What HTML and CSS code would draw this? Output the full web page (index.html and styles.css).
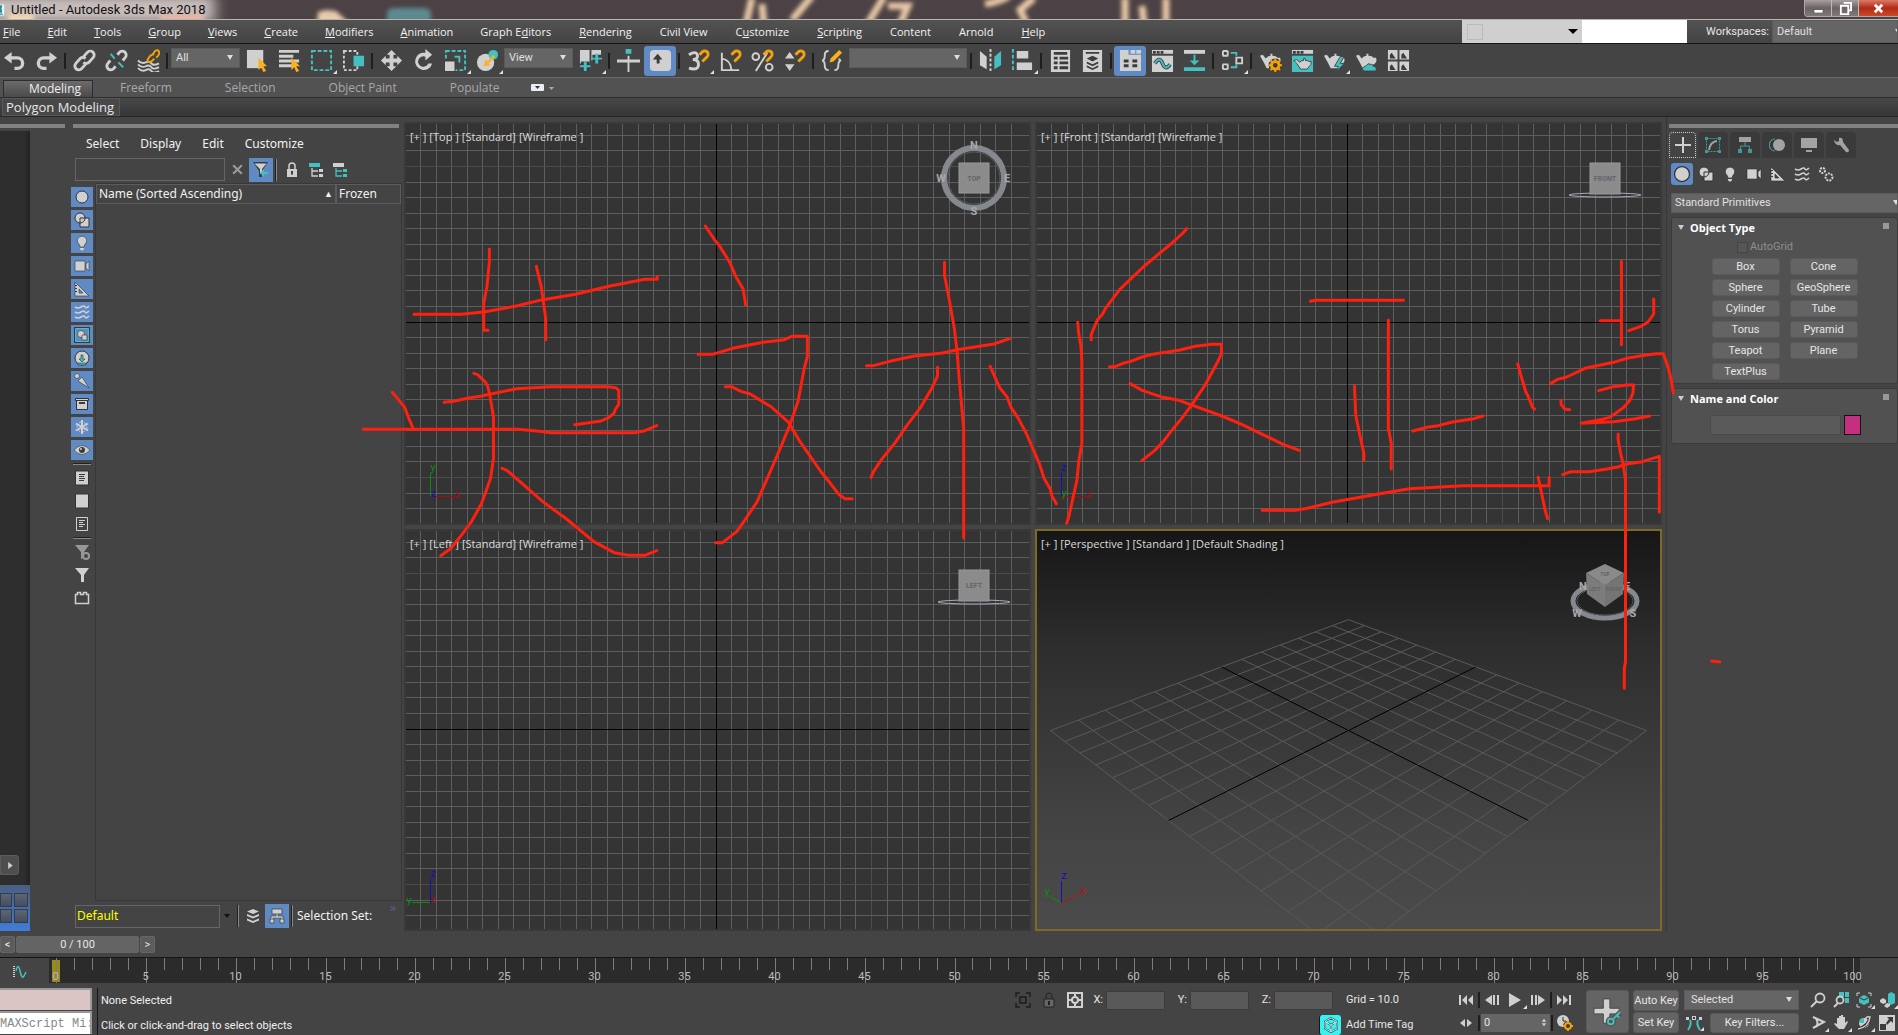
FILE: index.html
```
<!DOCTYPE html>
<html lang="en">
<head>
    <meta charset="UTF-8">
    <meta name="viewport" content="width=device-width, initial-scale=1.0">
    <title>Untitled - Autodesk 3ds Max 2018</title>
    <link rel="stylesheet" href="styles.css">
</head>
<body>
    <!-- Icon sprite -->
    <svg class="sprite" aria-hidden="true">
        <symbol id="undo" viewBox="0 0 24 24"><path d="M9 1v4.500h6a7 7 0 0 1 0 14.500h-3v-3.500h3a3.700 3.700 0 0 0 0-7.500H9V13L1 7z" transform="translate(0 2)"/></symbol>
        <symbol id="redo" viewBox="0 0 24 24"><path d="M15 3v4.500H9A7 7 0 0 0 9 22h3v-3.500H9A3.700 3.700 0 0 1 9 11h6v4l8-6z"/></symbol>
        <symbol id="link" viewBox="0 0 24 24"><g class="s w3"><path d="M11 8l4-4.500a4 4 0 0 1 6 5.500l-4.500 5a4 4 0 0 1-5.500 0"/><path d="M13 16l-4 4.500a4 4 0 0 1-6-5.500l4.500-5a4 4 0 0 1 5.500 0"/></g></symbol>
        <symbol id="unlink" viewBox="0 0 24 24"><g class="s w3"><path d="M13 6l2-2.500a4 4 0 0 1 6 5.500l-2.500 3"/><path d="M11 18l-2 2.500a4 4 0 0 1-6-5.500l2.500-3"/></g><path class="ts w2" d="M6 5l4 5m4 4l5 5"/></symbol>
        <symbol id="bind" viewBox="0 0 24 24"><path class="s w2" d="M1 12q4 4 8 2t6 1 8 0M1 16q4 4 8 2t6 1 8 0M1 20q4 4 8 2t6 1 8 0"/><path class="os w2" d="M16 6l3-4q3-2 4 1t-3 6m-2-3q-2-1-4 1l-3 4q0 4 4 2l3-3"/></symbol>
        <symbol id="selobj" viewBox="0 0 24 24"><path d="M1 1h17v19H1z"/><path class="o" d="M13 9l9 9h-4l3 5-3 1-2-5-3 3z"/></symbol>
        <symbol id="byname" viewBox="0 0 24 24"><path d="M1 1h21v3H1zM1 6h15v3H1zM1 11h21v3H1zM1 16h14v3H1z"/><path class="o" d="M14 9l9 9h-4l3 5-3 1-2-5-3 3z"/></symbol>
        <symbol id="rect" viewBox="0 0 24 24"><path class="ts w2" stroke-dasharray="4 2" d="M2 2h20v20H2z"/></symbol>
        <symbol id="cross" viewBox="0 0 24 24"><path class="s w2" stroke-dasharray="3 2" d="M2 2h14v20H2z"/><path class="t" d="M12 7h11v11H12z"/></symbol>
        <symbol id="move" viewBox="0 0 24 24"><path d="M12 1l5 5h-3v4h4V7l5 5-5 5v-3h-4v4h3l-5 5-5-5h3v-4H6v3l-5-5 5-5v3h4V6H7z"/></symbol>
        <symbol id="rotate" viewBox="0 0 24 24"><path d="M14 0v4a9 9 0 1 0 7 11h-4a5.500 5.500 0 1 1-3-7v4l7-6z"/></symbol>
        <symbol id="scale" viewBox="0 0 24 24"><path class="ts w2" stroke-dasharray="4 2" d="M2 2h20v20H2z"/><path class="k" d="M0 11h12v13H0z"/><path d="M1 13h10v10H1z"/><path class="ts w2" d="M11 8h5v6"/></symbol>
        <symbol id="place" viewBox="0 0 24 24"><circle cx="10" cy="14" r="9"/><circle class="t" cx="18" cy="6" r="5"/><path class="o" d="M8 18l2-7 2 2 6-7 2 2-7 7 2 2z"/></symbol>
        <symbol id="center" viewBox="0 0 24 24"><path d="M1 1h10v14H1zM13 1h10v11H13z"/><path class="k" d="M2 13h9v10H2zM14 6h9v8H14z"/><path class="t" d="M5 13h3v4h4v2H8v4H5v-4H1v-2h4zM17 5h3v4h4v2h-4v4h-3v-4h-4V9h4z"/></symbol>
        <symbol id="manip" viewBox="0 0 24 24"><path d="M11 7h2v4h11v3H13v10h-2V14H0v-3h11z"/><path class="t" d="M9 0h6v5H9z"/></symbol>
        <symbol id="kbd" viewBox="0 0 24 24"><rect x="1" y="1" width="22" height="22" rx="4"/><path class="k" d="M9 5l5 6h-3v4H8v-4H4z"/></symbol>
        <symbol id="magnet" viewBox="0 0 24 24"><path class="os w3" d="M13 6l3-3a3.500 3.500 0 0 1 5 5l-5 5"/></symbol>
        <symbol id="snap3" viewBox="0 0 24 24"><path class="s w3" d="M2 6q8-5 9 1 0 4-5 4 6 0 6 5 0 7-10 4"/><use href="#magnet"/></symbol>
        <symbol id="snapa" viewBox="0 0 24 24"><path class="s w2" d="M3 4v18h18M3 10q9 1 10 12"/><use href="#magnet"/></symbol>
        <symbol id="snapp" viewBox="0 0 24 24"><g class="s w2"><circle cx="5" cy="8" r="3.500"/><circle cx="19" cy="19" r="3.500"/><path d="M5 23L17 4"/></g><use href="#magnet"/></symbol>
        <symbol id="snaps" viewBox="0 0 24 24"><path d="M7 3l5 7H2zM7 23l5-7H2z"/><use href="#magnet"/></symbol>
        <symbol id="sets" viewBox="0 0 24 24"><path class="s w2" d="M8 2q-4 0-4 4 0 6-3 6 3 0 3 6 0 4 4 4M14 22q4 0 4-4 0-6 3-6-2 0-2-2"/><path class="o" d="M9 14l1-4 9-9 3 3-9 9z"/></symbol>
        <symbol id="mirror" viewBox="0 0 24 24"><path d="M1 2l7 6v13l-7-4z"/><path class="t" d="M23 2l-7 6v13l7-4z"/><path class="s w2" stroke-dasharray="3 2" d="M12 0v24"/></symbol>
        <symbol id="align" viewBox="0 0 24 24"><path class="ts w2" stroke-dasharray="4 2" d="M2 0v24"/><path d="M6 2h12v8H6zM6 14h16v8H6z"/></symbol>
        <symbol id="sheet" viewBox="0 0 24 24"><path d="M2 1h20v23H2z"/><path class="k" d="M5 3h14v3H5zM5 8h4v3H5zM11 8h9v3h-9zM5 13h4v3H5zM11 13h9v3h-9zM5 18h4v3H5zM11 18h9v3h-9z"/></symbol>
        <symbol id="layersheet" viewBox="0 0 24 24"><path d="M2 1h20v23H2z"/><path class="k" d="M5 3h14v2H5zM12 7l6 3-6 3-6-3zM6 13l6 3 6-3v2l-6 3-6-3zM6 17l6 3 6-3v2l-6 3-6-3z"/></symbol>
        <symbol id="ribbon" viewBox="0 0 24 24"><path d="M1 1h9v5h13v17H1z"/><path d="M12 1h5v4h-5zM18 1h5v4h-5z"/><path class="k" d="M5 11h5v3H5zM14 11h5v3h-5zM5 16h5v3H5zM14 16h5v3h-5z"/></symbol>
        <symbol id="curve" viewBox="0 0 24 24"><path d="M1 1h22v4H1z"/><path d="M1 7h22v17H1z"/><path class="k" d="M2 2h3v3H2zM6 2h3v3H6zM10 2h3v3h-3z"/><path class="s k2" d="M4 15q5-8 8 0t8 1"/><path class="ts w2" d="M4 15q5-8 8 0t8 1"/></symbol>
        <symbol id="dope" viewBox="0 0 24 24"><path d="M1 1h22v4H1z"/><path class="t" d="M1 19h22v4H1zM11 6h2v6h4l-5 5-5-5h4z"/></symbol>
        <symbol id="schem" viewBox="0 0 24 24"><path d="M1 1h7v7H1zM1 15h7v7H1zM15 8h8v8h-8z"/><path class="k" d="M3 3h3v3H3zM3 17h3v3H3zM17 10h4v4h-4zM1 1h1v1H1zM7 1h1v1H7zM1 7h1v1H1zM7 7h1v1H7zM1 15h1v1H1zM7 15h1v1H7zM1 21h1v1H1zM7 21h1v1H7z"/><path class="ts w2" d="M10 4h6v3M10 19h6v-3"/></symbol>
        <symbol id="pot" viewBox="0 0 24 24"><path d="M1 7l3-1 3 4q2-3 5-3V5h2v2q4 0 5 2h3q2 5-4 8l-2 3H8L5 14z"/></symbol>
        <symbol id="potgear" viewBox="0 0 24 24"><use href="#pot"/><circle class="k" cx="17" cy="17" r="7"/><circle class="os w3" cx="17" cy="17" r="4"/><path class="os w2" d="M17 10v3m0 8v3m-7-7h3m8 0h3M12 12l2 2m6 6l2 2m0-10l-2 2m-6 6l-2 2"/></symbol>
        <symbol id="potframe" viewBox="0 0 24 24"><path d="M1 1h22v4H1z"/><path class="t" d="M1 7h22v17H1z"/><path class="k" d="M2 2h3v3H2zM6 2h3v3H6zM10 2h3v3h-3z"/><path stroke="#444" d="M3 12l3-1 3 3q1-2 4-2v-2h2v2q3 0 4 1h2q1 4-2 5l-2 3h-7l-4-6z"/></symbol>
        <symbol id="potfast" viewBox="0 0 24 24"><use href="#pot"/><path class="t" stroke="#444" d="M18 8l-6 10h4l-2 6 8-9h-4l4-7z"/></symbol>
        <symbol id="potcloud" viewBox="0 0 24 24"><use href="#pot"/><path class="t" stroke="#444" d="M9 23q-3-4 2-5 2-4 6-2 2 0 2 2 4 0 3 5z"/></symbol>
        <symbol id="gallery" viewBox="0 0 24 24"><path d="M1 1h10v10H1zM13 1h10v10H13zM1 13h10v10H1zM13 13h10v10H13z"/><path class="k" d="M3 10V6l2-2 2 3 2 3zM15 10V6l2-2 2 3 2 3zM3 22v-4l2-2 2 3 2 3zM15 22v-4l2-2 2 3 2 3z"/></symbol>
        <symbol id="sphere" viewBox="0 0 16 16"><circle cx="8" cy="8" r="6" stroke="#333"/></symbol>
        <symbol id="shapes" viewBox="0 0 16 16"><circle cx="6" cy="6" r="5" stroke="#333"/><path stroke="#333" d="M6 6h9v9H6z"/><path fill="none" stroke="#333" d="M11 6a5 5 0 0 1-5 5"/></symbol>
        <symbol id="bulb" viewBox="0 0 16 16"><path stroke="#333" stroke-width=".6" d="M6 12q0-2-2-4a4.600 4.600 0 1 1 8 0q-2 2-2 4z"/><path d="M6 13h4v1l-1 1.500H7L6 14z"/></symbol>
        <symbol id="camera" viewBox="0 0 16 16"><path d="M1 3h10v10H1zM12 6l3-3v10l-3-3z" stroke="#333" stroke-width=".6"/></symbol>
        <symbol id="helper" viewBox="0 0 16 16"><path fill-rule="evenodd" stroke="#333" stroke-width=".6" d="M1 1l14 14H1zM5 8v4h4z"/><path class="k" d="M1 4h2v1H1zM1 7h2v1H1zM1 10h2v1H1z"/></symbol>
        <symbol id="waves" viewBox="0 0 16 16"><path class="s" stroke-width="1.600" d="M1 3q3 2 6 0t4 0 4-1M1 8q3 2 6 0t4 0 4-1M1 13q3 2 6 0t4 0 4-1"/></symbol>
        <symbol id="groups" viewBox="0 0 16 16"><path class="k" d="M0 0h16v16H0z"/><path fill="#5f8ac4" d="M2 2h12v12H2z"/><path class="ts" d="M1.500 1.500h13v13h-13z"/><circle cx="7" cy="7" r="3.500" stroke="#333" stroke-width=".6"/><path stroke="#333" stroke-width=".6" d="M8 8h5v5H8z"/></symbol>
        <symbol id="xref" viewBox="0 0 16 16"><circle cx="8" cy="8" r="7" stroke="#333"/><path class="t" stroke="#333" stroke-width=".6" d="M7 5h2v4h2l-3 3-3-3h2zM4 13h8v2H4z"/></symbol>
        <symbol id="bone" viewBox="0 0 16 16"><circle cx="3" cy="3" r="2.500" stroke="#333" stroke-width=".6"/><path stroke="#333" stroke-width=".6" d="M4 8l4-4 7 11z"/></symbol>
        <symbol id="box" viewBox="0 0 16 16"><path stroke="#333" d="M1.500 2.500h13v2h-13zM2.500 4.500h11v9h-11z"/><path class="k" d="M5 6h6v2H5z"/></symbol>
        <symbol id="frost" viewBox="0 0 16 16"><path class="s" stroke-width="2" d="M8 1v14M2 4.500l12 7M2 11.500l12-7"/><circle class="s" cx="8" cy="8" r="5" stroke-dasharray="3 2"/></symbol>
        <symbol id="eye" viewBox="0 0 16 16"><path stroke="#333" stroke-width=".6" d="M0 8q8-9 16 0-8 9-16 0z"/><circle class="k" cx="8" cy="8" r="3"/><circle cx="7" cy="7" r="1"/></symbol>
        <symbol id="doc" viewBox="0 0 16 16"><path stroke="#333" d="M1.500 1h13v14h-13z"/><path class="k" d="M5 4h6v1H5zM5 6h5v1H5zM5 8h6v1H5zM5 10h5v1H5z"/></symbol>
        <symbol id="blank" viewBox="0 0 16 16"><path stroke="#333" d="M1.500 1h13v14h-13z"/></symbol>
        <symbol id="docdark" viewBox="0 0 16 16"><path class="s" d="M2.500 1.500h11v13h-11z"/><path d="M5 4h6v1H5zM5 6h4v1H5zM5 8h6v1H5zM5 10h4v1H5z"/></symbol>
        <symbol id="funnel" viewBox="0 0 16 16"><path d="M1 1h14l-5 7v7H7V8z"/></symbol>
        <symbol id="funnelgear" viewBox="0 0 16 16"><g opacity=".6"><path d="M1 1h14l-5 7-2 7H7V8z"/><circle class="s w2" cx="12" cy="12" r="3"/></g></symbol>
        <symbol id="brick" viewBox="0 0 16 16"><path class="s" stroke-width="1.500" d="M1.500 4.500h2v-2h3v2h3v-2h3v2h2v9h-13z"/></symbol>
        <symbol id="funnelsel" viewBox="0 0 16 16"><path class="k" d="M0 0h15L9 9v6H6V9z"/><path d="M1.500 1.500h12L9 7v4l-1 1-1-1V7z"/><path class="t" d="M7 11l4-4v3h4v2h-4v3z"/></symbol>
        <symbol id="lock" viewBox="0 0 16 16"><path class="s" stroke-width="1.500" d="M5 7V4a3 3 0 0 1 6 0v3"/><path d="M3 7h10v8H3z"/><path class="k" d="M7 9h2v2l-.5 2h-1L7 11z"/></symbol>
        <symbol id="tree1" viewBox="0 0 16 16"><path class="t" d="M1 1h11v4H1z"/><path class="s" stroke-width="1.300" d="M4 6v8h6M4 9h6"/><path d="M11 7h4v3h-4zM11 12h4v3h-4z"/></symbol>
        <symbol id="tree2" viewBox="0 0 16 16"><path d="M1 1h11v4H1z"/><path class="ts" stroke-width="1.300" d="M4 6v8h6M4 9h6"/><path class="t" d="M11 7h4v3h-4zM11 12h4v3h-4z"/></symbol>
        <symbol id="layers" viewBox="0 0 16 16"><path d="M8 1l6 2.500L8 6 2 3.500zM2 6l6 2.500L14 6v2l-6 2.500L2 8zM2 10.500L8 13l6-2.500v2L8 15l-6-2.500z"/></symbol>
        <symbol id="hier" viewBox="0 0 16 16"><path fill="none" stroke="#333" stroke-width="2.500" d="M8 6v3M3 11V9h10v2"/><path stroke="#333" stroke-width=".7" d="M3 1h10v5H3zM1 11h4v4H1zM11 11h4v4h-4z"/><path class="s" stroke-width="1.300" d="M8 6v3M3 11V9h10v2"/></symbol>
        <symbol id="plus" viewBox="0 0 16 16"><path d="M7 0h2v7h7v2H9v7H7V9H0V7h7z"/></symbol>
        <symbol id="modify" viewBox="0 0 16 16"><path class="ts" stroke-dasharray="2 1" d="M1.500 1.500h13v13h-13z"/><path class="t" d="M0 0h3v3H0zM13 0h3v3h-3zM0 13h3v3H0zM13 13h3v3h-3z"/><path class="s w2" d="M4 13q1-8 8-9"/></symbol>
        <symbol id="hierarchy" viewBox="0 0 16 16"><path d="M2 0h12v5H2z"/><path class="ts" d="M8 5v4M3.500 12V9h9v3"/><path class="t" d="M1 12h4v4H1zM11 12h4v4h-4z"/></symbol>
        <symbol id="motion" viewBox="0 0 16 16"><path class="ts" d="M6 2a6 6 0 0 0 0 12M3.500 2.500a6.500 6.500 0 0 0 0 11"/><circle cx="10" cy="8" r="6"/></symbol>
        <symbol id="display" viewBox="0 0 16 16"><path d="M0 1h16v10H0zM5 13h6v2H5z"/></symbol>
        <symbol id="wrench" viewBox="0 0 16 16"><path d="M1 3l3 2 2-1V1q4-1 4 4l6 8q0 3-3 2L7 8Q2 9 1 3z"/></symbol>
        <symbol id="gears" viewBox="0 0 16 16"><circle class="s w2" stroke-dasharray="2 1" cx="4.500" cy="4.500" r="2.500"/><circle class="s w2" stroke-dasharray="2 1" cx="11" cy="11" r="3.500"/></symbol>
        <symbol id="minicurve" viewBox="0 0 16 16"><path class="s w2" stroke-dasharray="1 1" d="M3 3v11"/><path class="ts" stroke-width="1.500" d="M5 8q2-9 4 0t4 5l2-4"/></symbol>
        <symbol id="isolate" viewBox="0 0 16 16"><path fill="none" stroke="#1c1c1c" stroke-width="1.500" d="M1 5V1h4M11 1h4v4M15 11v4h-4M5 15H1v-4M5 5h6v6H5z"/></symbol>
        <symbol id="lockdark" viewBox="0 0 16 16"><path stroke="#222" fill="none" d="M5 7V4a3 3 0 0 1 6 0v3"/><path fill="#666" stroke="#222" d="M3 7h10v8H3z"/><path fill="#222" d="M7 9h2v4H7z"/></symbol>
        <symbol id="absrel" viewBox="0 0 16 16"><path class="s w2" d="M1 1h14v14H1z"/><path class="s w2" d="M8 1v14M1 8h14"/><circle fill="#444" stroke="#d0d0d0" stroke-width="2" cx="8" cy="8" r="3"/></symbol>
        <symbol id="cube" viewBox="0 0 16 16"><path fill="none" stroke="#244" stroke-width="2" d="M8 1l6 3.500v7L8 15l-6-3.500v-7zM5 6l3 2 3-2M8 8v4"/><path fill="none" stroke="#d8e8e8" d="M8 1l6 3.500v7L8 15l-6-3.500v-7zM2 4.500L8 8l6-3.500M8 8v7"/></symbol>
        <symbol id="first" viewBox="0 0 16 16"><path d="M1 3h2v10H1zM9 3v10L4 8zM15 3v10l-5-5z"/></symbol>
        <symbol id="prev" viewBox="0 0 16 16"><path d="M8 3v10L1 8zM9 3h2v10H9zM13 3h2v10h-2z"/></symbol>
        <symbol id="play" viewBox="0 0 16 16"><path d="M2 1l12 7-12 7z"/></symbol>
        <symbol id="next" viewBox="0 0 16 16"><path d="M1 3h2v10H1zM5 3h2v10H5zM8 3v10l7-5z"/></symbol>
        <symbol id="last" viewBox="0 0 16 16"><path d="M13 3h2v10h-2zM7 3v10l5-5zM1 3v10l5-5z"/></symbol>
        <symbol id="keymode" viewBox="0 0 16 16"><path d="M7 4v8L2 8zM9 4v8l5-4z"/></symbol>
        <symbol id="timecfg" viewBox="0 0 16 16"><circle cx="6" cy="6" r="6"/><path fill="none" stroke="#333" d="M6 2v4h3"/><circle class="k" cx="11" cy="11" r="5"/><circle class="os w2" cx="11" cy="11" r="3"/><path class="os w2" d="M11 6v2m0 6v2M6 11h2m6 0h2"/></symbol>
        <symbol id="bigkey" viewBox="0 0 32 32"><path d="M11 2h7v10h10v6H18v10h-7V18H1v-6h10z" stroke="#444"/><g class="s k3"><circle cx="19" cy="26" r="3"/><path d="M22 23l7-7m-3 2l3 3"/></g><g class="ts w2"><circle cx="19" cy="26" r="3"/><path d="M22 23l7-7m-4 3l3 3"/></g></symbol>
        <symbol id="tangent" viewBox="0 0 16 16"><path class="ts w2" d="M2 15q4-6 2-10M14 15q-4-6-2-10"/><path d="M0 2h3v3H0zM13 2h3v3h-3zM6 1h4v4H6z"/><path class="k" d="M7 2h2v2H7z"/></symbol>
        <symbol id="zoom" viewBox="0 0 16 16"><circle class="s" stroke-width="1.800" cx="10" cy="6" r="4.500"/><path class="s w2" d="M7 9l-6 6"/></symbol>
        <symbol id="zoomall" viewBox="0 0 16 16"><path class="t" d="M6 0h5v5H6zM12 0h4v5h-4zM12 6h4v5h-4z"/><circle class="s" stroke-width="1.800" cx="7" cy="8" r="3.500"/><path class="s w2" d="M5 11l-4 4"/></symbol>
        <symbol id="extents" viewBox="0 0 16 16"><path class="s" d="M1 4V1h3M12 1h3v3M15 12v3h-3M4 15H1v-3"/><path class="t" d="M8 3l5 2.500v5L8 13l-5-2.500v-5z"/><path fill="none" stroke="#333" d="M3 5.500L8 8l5-2.500"/></symbol>
        <symbol id="extall" viewBox="0 0 16 16"><path class="t" d="M12 0l4 2v9l-4 2-3-2V2z"/><path d="M4 6l3 2v3l-3 1-3-2V8zM8 11l3 1v2l-3 2-3-2z"/></symbol>
        <symbol id="fov" viewBox="0 0 16 16"><path class="s w2" d="M3 2l11 5L3 13M6 4q3 4 0 8"/></symbol>
        <symbol id="pan" viewBox="0 0 16 16"><path d="M4 9V3h2v4-6h2v6-7h2v7-5h2v6l2-2 1 1-4 7H6L1 9l1-1z"/></symbol>
        <symbol id="orbit" viewBox="0 0 16 16"><circle cx="8" cy="8" r="5"/><path class="t" d="M3 8a5 5 0 0 1 5-5v5z"/><path fill="none" stroke="#333" stroke-width="3" d="M2 14Q13 11 14 2"/><path class="s" stroke-width="1.500" d="M2 14q11-2 12-12-3-1-5 2"/></symbol>
        <symbol id="maxvp" viewBox="0 0 16 16"><path d="M0 0h16v16H0z"/><path class="k" d="M1 9h6v6H1zM8 2h6v6l-2-2-4 4-1-2 3-4z"/></symbol>
    </svg>

    <div class="app">
        <!-- Title bar -->
        <header class="titlebar">
            <svg class="wallpaper" width="1898" height="20" aria-hidden="true">
                <filter id="soft" x="-20%" y="-50%" width="140%" height="200%"><feGaussianBlur stdDeviation="2"/></filter>
                <filter id="softer" x="-20%" y="-80%" width="140%" height="260%"><feGaussianBlur stdDeviation="7 4"/></filter>
                <rect x="-20" y="-4" width="235" height="26" fill="#c6bcba" filter="url(#softer)"/>
                <g filter="url(#soft)">
                    <path fill="#efd9b4" d="M8 14h26v10H8z"/>
                    <path fill="#e8b6a8" d="M160 14h44v10h-44z"/>
                    <path fill="#e9cbab" d="M318 12l8-2 10 1 13 12h-32z"/>
                    <path fill="#5c8a90" d="M387 12q2-4 8-4h28q8 0 8 6v8h-44z"/>
                    <g fill="none" stroke="#e8c8a6" stroke-width="7">
                        <path d="M752-2L746 24M812-4L792 20M762 4l2 22"/>
                        <path d="M884-3l-16 26M888 6h20l-8 18"/>
                        <path d="M985 4q14-2 24-8M1034-2l-14 12 6 12"/>
                        <path d="M1125-2v26M1142 6l2 18M1166-2v26"/>
                    </g>
                </g>
            </svg>
            <svg class="app-icon" viewBox="0 0 16 20" aria-hidden="true"><path fill="#eef6f6" d="M0 2h6v16H0z"/><path fill="#2a8f96" d="M0 3h3v3l-1 2 1 2v4H0zM0 15h4v2H0z"/></svg>
            <span class="caption">Untitled - Autodesk 3ds Max 2018</span>
            <div class="window-buttons">
                <button aria-label="Minimize"><svg viewBox="0 0 14 14"><path d="M2 8h10v4H2z" fill="#fff" stroke="#555"/></svg></button>
                <button aria-label="Restore"><svg viewBox="0 0 14 14"><path d="M5 1h8v8h-2M2 4h8v9H2z" fill="none" stroke="#fff" stroke-width="2"/></svg></button>
                <button class="close" aria-label="Close"><svg viewBox="0 0 14 14"><path d="M3 3l8 8M11 3l-8 8" stroke="#fff" stroke-width="3"/></svg></button>
            </div>
        </header>

        <!-- Menu bar -->
        <div class="menubar">
            <nav class="menu">
                <a href="#"><u>F</u>ile</a>
                <a href="#"><u>E</u>dit</a>
                <a href="#"><u>T</u>ools</a>
                <a href="#"><u>G</u>roup</a>
                <a href="#"><u>V</u>iews</a>
                <a href="#"><u>C</u>reate</a>
                <a href="#"><u>M</u>odifiers</a>
                <a href="#"><u>A</u>nimation</a>
                <a href="#">Graph E<u>d</u>itors</a>
                <a href="#"><u>R</u>endering</a>
                <a href="#">Civil View</a>
                <a href="#">C<u>u</u>stomize</a>
                <a href="#"><u>S</u>cripting</a>
                <a href="#">Content</a>
                <a href="#">Arnold</a>
                <a href="#"><u>H</u>elp</a>
            </nav>
            <button class="swatch-menu" aria-label="Search scope"><i></i><b></b></button>
            <input class="search-help" aria-label="Search">
            <label for="workspace">Workspaces:</label>
            <select id="workspace" class="combo"><option>Default</option></select>
        </div>

        <!-- Main toolbar -->
        <div class="toolbar">
            <button title="Undo"><svg><use href="#undo"/></svg></button>
            <button title="Redo"><svg><use href="#redo"/></svg></button>
            <hr>
            <button title="Link"><svg><use href="#link"/></svg></button>
            <button title="Unlink"><svg><use href="#unlink"/></svg></button>
            <button title="Bind to Space Warp"><svg><use href="#bind"/></svg></button>
            <hr>
            <select class="combo" aria-label="Selection filter"><option>All</option></select>
            <button title="Select Object"><svg><use href="#selobj"/></svg></button>
            <button title="Select by Name"><svg><use href="#byname"/></svg></button>
            <button title="Selection Region" class="more"><svg><use href="#rect"/></svg></button>
            <button title="Window / Crossing"><svg><use href="#cross"/></svg></button>
            <hr>
            <button title="Move"><svg><use href="#move"/></svg></button>
            <button title="Rotate"><svg><use href="#rotate"/></svg></button>
            <button title="Scale" class="more"><svg><use href="#scale"/></svg></button>
            <button title="Place" class="more"><svg><use href="#place"/></svg></button>
            <select class="combo" aria-label="Coordinate system"><option>View</option></select>
            <button title="Use Pivot Center" class="more"><svg><use href="#center"/></svg></button>
            <hr>
            <button title="Manipulate"><svg><use href="#manip"/></svg></button>
            <button title="Keyboard Override" class="on"><svg><use href="#kbd"/></svg></button>
            <hr>
            <button title="Snaps Toggle" class="more"><svg><use href="#snap3"/></svg></button>
            <button title="Angle Snap"><svg><use href="#snapa"/></svg></button>
            <button title="Percent Snap"><svg><use href="#snapp"/></svg></button>
            <button title="Spinner Snap"><svg><use href="#snaps"/></svg></button>
            <hr>
            <button title="Edit Selection Sets"><svg><use href="#sets"/></svg></button>
            <select class="combo wide" aria-label="Named selection sets"><option></option></select>
            <hr>
            <button title="Mirror"><svg><use href="#mirror"/></svg></button>
            <button title="Align" class="more"><svg><use href="#align"/></svg></button>
            <hr>
            <button title="Scene Explorer"><svg><use href="#sheet"/></svg></button>
            <button title="Layer Explorer"><svg><use href="#layersheet"/></svg></button>
            <hr>
            <button title="Ribbon" class="on"><svg><use href="#ribbon"/></svg></button>
            <button title="Curve Editor"><svg><use href="#curve"/></svg></button>
            <button title="Dope Sheet"><svg><use href="#dope"/></svg></button>
            <hr>
            <button title="Schematic View" class="more"><svg><use href="#schem"/></svg></button>
            <hr>
            <button title="Render Setup"><svg><use href="#potgear"/></svg></button>
            <button title="Rendered Frame"><svg><use href="#potframe"/></svg></button>
            <button title="Render Production" class="more"><svg><use href="#potfast"/></svg></button>
            <button title="Render in Cloud"><svg><use href="#potcloud"/></svg></button>
            <button title="Gallery"><svg><use href="#gallery"/></svg></button>
        </div>

        <!-- Ribbon -->
        <div class="ribbon-tabs">
            <button class="active">Modeling</button>
            <button>Freeform</button>
            <button>Selection</button>
            <button>Object Paint</button>
            <button>Populate</button>
            <svg class="ribbon-min" viewBox="0 0 24 10" aria-hidden="true"><rect x="0" y="1" width="13" height="7" rx="1" fill="#e8eef4"/><path d="M4 3h5L6.500 6z" fill="#333"/><path d="M18 4h5l-2.500 3z" fill="#aaa"/></svg>
        </div>
        <div class="ribbon-panel"><button>Polygon Modeling</button></div>

        <div class="workspace">
            <!-- Viewport layout strip -->
            <aside class="layout-strip">
                <div class="grip"></div>
                <div class="strip-body">
                    <button class="strip-arrow" aria-label="Expand"><svg viewBox="0 0 8 10"><path d="M2 1l5 4-5 4z"/></svg></button>
                    <button class="strip-tile" aria-label="Quad layout"><i></i><i></i><i></i><i></i></button>
                </div>
            </aside>

            <!-- Scene explorer -->
            <section class="explorer">
                <div class="grip"></div>
                <nav class="explorer-menu">
                    <a href="#">Select</a>
                    <a href="#">Display</a>
                    <a href="#">Edit</a>
                    <a href="#">Customize</a>
                </nav>
                <div class="explorer-search">
                    <input aria-label="Find">
                    <button class="clear" aria-label="Clear"><svg viewBox="0 0 12 12"><path d="M2 2l8 8M10 2l-8 8" stroke="#999" stroke-width="2"/></svg></button>
                    <button class="on" title="Filter selection"><svg><use href="#funnelsel"/></svg></button>
                    <hr>
                    <button title="Lock"><svg><use href="#lock"/></svg></button>
                    <button title="Sort by hierarchy"><svg><use href="#tree1"/></svg></button>
                    <button title="Sort by layer"><svg><use href="#tree2"/></svg></button>
                </div>
                <div class="explorer-body">
                    <div class="filters">
                        <button class="on" title="Geometry"><svg><use href="#sphere"/></svg></button>
                        <button class="on" title="Shapes"><svg><use href="#shapes"/></svg></button>
                        <button class="on" title="Lights"><svg><use href="#bulb"/></svg></button>
                        <button class="on" title="Cameras"><svg><use href="#camera"/></svg></button>
                        <button class="on" title="Helpers"><svg><use href="#helper"/></svg></button>
                        <button class="on" title="Space Warps"><svg><use href="#waves"/></svg></button>
                        <button class="on" title="Groups"><svg><use href="#groups"/></svg></button>
                        <button class="on" title="XRefs"><svg><use href="#xref"/></svg></button>
                        <button class="on" title="Bones"><svg><use href="#bone"/></svg></button>
                        <button class="on" title="Containers"><svg><use href="#box"/></svg></button>
                        <button class="on" title="Frozen"><svg><use href="#frost"/></svg></button>
                        <button class="on" title="Hidden"><svg><use href="#eye"/></svg></button>
                        <hr>
                        <button title="All"><svg><use href="#doc"/></svg></button>
                        <button title="None"><svg><use href="#blank"/></svg></button>
                        <button title="Invert"><svg><use href="#docdark"/></svg></button>
                        <hr>
                        <button title="Configure filter"><svg><use href="#funnelgear"/></svg></button>
                        <button title="Filter"><svg><use href="#funnel"/></svg></button>
                        <button title="Containers"><svg><use href="#brick"/></svg></button>
                    </div>
                    <div class="list">
                        <table>
                            <thead>
                                <tr><th>Name (Sorted Ascending)<span>▲</span></th><th>Frozen</th></tr>
                            </thead>
                            <tbody></tbody>
                        </table>
                    </div>
                </div>
                <div class="explorer-foot">
                    <select aria-label="Explorer"><option>Default</option></select>
                    <i class="caret"></i>
                    <hr>
                    <button title="Layers"><svg><use href="#layers"/></svg></button>
                    <button class="on" title="Hierarchy"><svg><use href="#hier"/></svg></button>
                    <hr>
                    <span>Selection Set:</span>
                    <b>»</b>
                </div>
            </section>

            <!-- Viewports -->
            <main class="viewports">
                <div class="viewport" data-view="flat">
                    <svg class="grid"></svg>
                    <div class="vp-label"><span>[+ ]</span><span>[Top ]</span><span>[Standard]</span><span>[Wireframe ]</span></div>
                    <svg class="viewcube" viewBox="0 0 80 80">
                        <circle cx="40" cy="40" r="30" fill="none" stroke="#85898e" stroke-width="6"/>
                        <circle cx="40" cy="40" r="26" fill="none" stroke="#55585c"/>
                        <rect x="25" y="25" width="30" height="30" fill="#8b8b8b" stroke="#999"/>
                        <text x="40" y="43" class="face">TOP</text>
                        <text x="40" y="11">N</text><text x="40" y="77">S</text><text x="7" y="44">W</text><text x="73" y="44">E</text>
                    </svg>
                    <svg class="tripod" viewBox="0 0 60 50"><path stroke="#0a8f0a" d="M26.500 38V14"/><path stroke="#a01010" d="M26 37.500h28"/><text x="29" y="12" fill="#0a8f0a">y</text><text x="54" y="39" fill="#a01010">x</text><text x="29" y="38" fill="#1010c0">z</text></svg>
                </div>
                <div class="viewport" data-view="flat">
                    <svg class="grid"></svg>
                    <div class="vp-label"><span>[+ ]</span><span>[Front ]</span><span>[Standard]</span><span>[Wireframe ]</span></div>
                    <svg class="viewcube" viewBox="0 0 80 80">
                        <ellipse cx="40" cy="57" rx="36" ry="2" fill="none" stroke="#aab" stroke-width="1"/>
                        <rect x="25" y="25" width="30" height="31" fill="#8b8b8b" stroke="#999"/>
                        <text x="40" y="43" class="face">FRONT</text>
                    </svg>
                    <svg class="tripod" viewBox="0 0 60 50"><path stroke="#1010c0" d="M26.500 38V14"/><path stroke="#a01010" d="M26 37.500h28"/><text x="29" y="12" fill="#1010c0">z</text><text x="54" y="39" fill="#a01010">x</text><text x="29" y="38" fill="#0a8f0a">y</text></svg>
                </div>
                <div class="viewport" data-view="flat">
                    <svg class="grid"></svg>
                    <div class="vp-label"><span>[+ ]</span><span>[Left ]</span><span>[Standard]</span><span>[Wireframe ]</span></div>
                    <svg class="viewcube" viewBox="0 0 80 80">
                        <ellipse cx="40" cy="57" rx="36" ry="2" fill="none" stroke="#aab" stroke-width="1"/>
                        <rect x="25" y="25" width="30" height="31" fill="#8b8b8b" stroke="#999"/>
                        <text x="40" y="43" class="face">LEFT</text>
                    </svg>
                    <svg class="tripod" viewBox="0 0 60 50"><path stroke="#1010c0" d="M26.500 38V14"/><path stroke="#0a8f0a" d="M26 37.500H8"/><text x="29" y="12" fill="#1010c0">z</text><text x="5" y="39" fill="#0a8f0a">y</text><text x="29" y="38" fill="#a01010">x</text></svg>
                </div>
                <div class="viewport active" data-view="perspective">
                    <svg class="grid"></svg>
                    <div class="vp-label"><span>[+ ]</span><span>[Perspective ]</span><span>[Standard ]</span><span>[Default Shading ]</span></div>
                    <svg class="viewcube" viewBox="0 0 80 80">
                        <ellipse cx="40" cy="56" rx="32" ry="17" fill="#222" stroke="#85898e" stroke-width="5"/>
                        <ellipse cx="40" cy="56" rx="28" ry="14" fill="none" stroke="#55585c"/>
                        <path d="M40 19l19 9-19 12-19-12z" fill="#8a8a8a"/>
                        <path d="M21 28l19 12v22L22 49z" fill="#7c7c7c"/>
                        <path d="M59 28L40 40v22l18-13z" fill="#747474"/>
                        <text x="40" y="31" class="face tiny">TOP</text><text x="30" y="46" class="face tiny">LEFT</text><text x="49" y="46" class="face tiny">FRONT</text>
                        <text x="12" y="72">W</text><text x="68" y="72">S</text><text x="18" y="45">N</text><text x="62" y="45">E</text>
                    </svg>
                    <svg class="tripod" viewBox="0 0 60 50"><path stroke="#1010c0" d="M26.500 38V16"/><path stroke="#c01010" d="M26.500 38l19-10"/><path stroke="#0a8f0a" d="M26.500 38l-13-7"/><text x="29" y="14" fill="#1010c0">z</text><text x="48" y="29" fill="#c01010">x</text><text x="12" y="30" fill="#0a8f0a">y</text></svg>
                </div>
            </main>

            <!-- Command panel -->
            <aside class="command">
                <div class="grip"></div>
                <div class="command-tabs">
                    <button class="active" title="Create"><svg><use href="#plus"/></svg></button>
                    <button title="Modify"><svg><use href="#modify"/></svg></button>
                    <button title="Hierarchy"><svg><use href="#hierarchy"/></svg></button>
                    <button title="Motion"><svg><use href="#motion"/></svg></button>
                    <button title="Display"><svg><use href="#display"/></svg></button>
                    <button title="Utilities"><svg><use href="#wrench"/></svg></button>
                </div>
                <div class="categories">
                    <button class="on" title="Geometry"><svg><use href="#sphere"/></svg></button>
                    <button title="Shapes"><svg><use href="#shapes"/></svg></button>
                    <button title="Lights"><svg><use href="#bulb"/></svg></button>
                    <button title="Cameras"><svg><use href="#camera"/></svg></button>
                    <button title="Helpers"><svg><use href="#helper"/></svg></button>
                    <button title="Space Warps"><svg><use href="#waves"/></svg></button>
                    <button title="Systems"><svg><use href="#gears"/></svg></button>
                </div>
                <select class="combo primitives" aria-label="Category"><option>Standard Primitives</option></select>
                <section class="rollout">
                    <h2>Object Type</h2>
                    <label class="autogrid"><input type="checkbox" disabled>AutoGrid</label>
                    <div class="object-grid">
                        <button>Box</button><button>Cone</button>
                        <button>Sphere</button><button>GeoSphere</button>
                        <button>Cylinder</button><button>Tube</button>
                        <button>Torus</button><button>Pyramid</button>
                        <button>Teapot</button><button>Plane</button>
                        <button>TextPlus</button>
                    </div>
                </section>
                <section class="rollout">
                    <h2>Name and Color</h2>
                    <div class="name-color">
                        <input aria-label="Object name">
                        <button class="color" aria-label="Object color"></button>
                    </div>
                </section>
            </aside>
        </div>

        <!-- Time slider and track bar -->
        <div class="time-slider">
            <button>&lt;</button>
            <button class="thumb">0 / 100</button>
            <button>&gt;</button>
        </div>
        <div class="track">
            <button aria-label="Mini curve editor"><svg><use href="#minicurve"/></svg></button>
            <svg class="ruler"></svg>
        </div>

        <!-- Status bar -->
        <footer class="status">
            <div class="listener">
                <div class="macro"></div>
                <input value="MAXScript Mi:" aria-label="MAXScript Mini Listener">
            </div>
            <div class="prompt">
                <p>None Selected</p>
                <p>Click or click-and-drag to select objects</p>
            </div>
            <div class="coords">
                <div class="coord-row">
                    <button title="Isolate"><svg><use href="#isolate"/></svg></button>
                    <button title="Selection Lock"><svg><use href="#lockdark"/></svg></button>
                    <button title="Absolute Mode"><svg><use href="#absrel"/></svg></button>
                    <label for="cx">X:</label><input id="cx">
                    <label for="cy">Y:</label><input id="cy">
                    <label for="cz">Z:</label><input id="cz">
                    <span>Grid = 10.0</span>
                </div>
                <div class="tag-row">
                    <button title="Adaptive Degradation"><svg><use href="#cube"/></svg></button>
                    <span>Add Time Tag</span>
                </div>
            </div>
            <div class="transport">
                <div>
                    <button title="Go to Start"><svg><use href="#first"/></svg></button>
                    <hr>
                    <button title="Previous Frame"><svg><use href="#prev"/></svg></button>
                    <button title="Play" class="more"><svg><use href="#play"/></svg></button>
                    <button title="Next Frame"><svg><use href="#next"/></svg></button>
                    <hr>
                    <button title="Go to End"><svg><use href="#last"/></svg></button>
                </div>
                <div>
                    <button title="Key Mode"><svg><use href="#keymode"/></svg></button>
                    <hr>
                    <label class="spin"><input value="0" aria-label="Current frame"><svg viewBox="0 0 8 12"><path d="M4 1l3 4H1zM4 11l3-4H1z"/></svg></label>
                    <hr>
                    <button title="Time Configuration"><svg><use href="#timecfg"/></svg></button>
                </div>
            </div>
            <button class="set-keys" title="Set Keys"><svg><use href="#bigkey"/></svg></button>
            <div class="key-modes">
                <button>Auto Key</button>
                <button>Set Key</button>
            </div>
            <div class="key-filters">
                <select class="combo" aria-label="Key set"><option>Selected</option></select>
                <div>
                    <button class="tangent more" title="Tangents"><svg><use href="#tangent"/></svg></button>
                    <button class="filter-btn">Key Filters...</button>
                </div>
            </div>
            <div class="nav-tools">
                <button title="Zoom"><svg><use href="#zoom"/></svg></button>
                <button title="Zoom All"><svg><use href="#zoomall"/></svg></button>
                <button title="Zoom Extents" class="more"><svg><use href="#extents"/></svg></button>
                <button title="Zoom Extents All" class="more"><svg><use href="#extall"/></svg></button>
                <button title="Field of View" class="more"><svg><use href="#fov"/></svg></button>
                <button title="Pan" class="more"><svg><use href="#pan"/></svg></button>
                <button title="Orbit" class="more"><svg><use href="#orbit"/></svg></button>
                <button title="Maximize Viewport"><svg><use href="#maxvp"/></svg></button>
            </div>
        </footer>
    </div>

    <!-- Red pen notes drawn over the window -->
    <svg class="ink" viewBox="0 0 1898 1035" preserveAspectRatio="none" aria-hidden="true">
        <g transform="translate(400 115) scale(.40816 .33333)">
            <path d="M219 402V440L213 515 205 565V646H216"/>
            <path d="M334 454L346 515 357 610V674"/>
            <path d="M34 598H150L205 591 285 573 350 554 430 538 515 513 600 493H630V485"/>
            <path d="M748 333L770 373 784 395 808 442 823 485 841 523 847 571"/>
            <path d="M730 718H765L815 700 890 682 942 674 960 664H998V725L990 762 975 860 955 930 930 1005 875 1160 845 1215 825 1250 790 1283H773"/>
            <path d="M797 815H812L835 829 858 837 910 876 952 922 980 980 1030 1068 1048 1095 1075 1138 1090 1151H1108"/>
            <path d="M1334 442V480L1345 550 1358 640 1365 710 1370 790 1381 940V1269"/>
            <path d="M1143 752H1160L1200 739 1260 723 1330 714 1365 704 1455 687 1494 671"/>
            <path d="M1317 757V783L1305 815 1275 878 1240 935 1215 980 1180 1033 1160 1070 1154 1087"/>
            <path d="M1446 754L1470 820 1487 845 1497 877 1515 910 1535 957 1566 1045 1578 1090 1593 1122 1597 1142 1608 1166"/>
            <path d="M108 862L132 859 165 850 200 843 285 821 370 815H510L528 818 536 826V868L528 882 524 895 510 909 493 918 428 929"/>
            <path d="M181 775L190 779 209 801 215 815 220 840 229 905V1030L222 1090 200 1165 175 1220 152 1258 125 1300 100 1322"/>
            <path d="M250 1060L262 1066 355 1165 405 1209 475 1280 525 1313 560 1321H600L629 1307"/>
            <path d="M-19 832L0 860 12 878 22 912 27 925 32 940"/>
            <path d="M-90 943H290L340 949 370 953H575L600 947 629 932"/>
        </g>
        <g transform="translate(1030 115) scale(.40816 .33333)">
            <path d="M384 341L373 356 345 387 280 453 220 523 185 580 178 597 165 615 150 658V674"/>
            <path d="M117 622L119 652 125 695 127 740V985L120 1035 115 1095 96 1200 90 1225"/>
            <path d="M195 755H208L228 745 245 740 275 726 300 718 365 706 405 694 445 688H469V716L460 740 430 808 395 872 373 908 345 950 325 982 305 1007 274 1037"/>
            <path d="M245 806L275 826 325 847 365 856 470 903 520 929 620 988 660 1006"/>
            <path d="M687 559L700 556H915"/>
            <path d="M878 615V940L885 985V1062"/>
            <path d="M795 814L798 900 808 960 818 1015V1035"/>
            <path d="M569 1186H650L680 1180 740 1162 850 1138 930 1121 1060 1112H1272V1087"/>
            <path d="M1245 1087L1250 1115 1262 1185 1268 1211"/>
            <path d="M938 948L972 937 1000 932 1035 921 1087 911 1110 903"/>
            <path d="M1195 747L1202 778 1214 828 1222 848 1231 877 1236 882"/>
            <path d="M1275 806L1293 793 1315 786 1360 760 1430 742 1465 729 1510 720 1535 716H1552L1564 760 1572 800 1576 834"/>
            <path d="M1301 856V868L1310 882 1322 884"/>
            <path d="M1393 827L1430 815 1462 810H1479L1477 835 1470 855 1455 877 1435 895 1420 907 1395 915 1350 925 1430 920 1480 912 1518 903"/>
            <path d="M1397 617H1449M1449 439V689"/>
            <path d="M1528 552V597L1515 620 1495 635 1467 647"/>
            <path d="M1441 957V975L1447 1015 1453 1045 1459 1095V1640L1456 1660V1720"/>
            <path d="M1305 1079L1325 1070H1370L1410 1063 1440 1056 1462 1047 1500 1040 1542 1024V1191"/>
            <path d="M1670 1638L1690 1641"/>
        </g>
    </svg>

    <script>
        const SPACING = 15.55;

        function line(x1, y1, x2, y2, cls) {
            return `<line x1="${x1}" y1="${y1}" x2="${x2}" y2="${y2}" class="${cls}"/>`;
        }

        // Orthographic grid: every tenth line is dimmer, the axes are black
        function flatGrid(w, h) {
            const cx = Math.floor(w / 2) - 0.5;
            const cy = Math.floor(h / 2) - 0.5;
            let out = '';
            for (let i = -Math.floor(cx / SPACING); i <= cx / SPACING; i++) {
                const x = Math.round(cx + i * SPACING) - 0.5;
                if (i !== 0) out += line(x, 0, x, h, i % 10 === 0 ? 'dim' : 'minor');
            }
            for (let i = -Math.floor(cy / SPACING); i <= cy / SPACING; i++) {
                const y = Math.round(cy + i * SPACING) - 0.5;
                if (i !== 0) out += line(0, y, w, y, i % 10 === 0 ? 'dim' : 'minor');
            }
            return out + line(cx, 0, cx, h, 'axis') + line(0, cy, w, cy, 'axis');
        }

        // Ground plane seen from above one corner
        function perspectiveGrid(w, h) {
            const n = 7;
            const project = (u, v) => {
                const depth = 1 - 0.172 * (u + v) / n;
                return [w / 2 + 149 * (u - v) / n / depth, h / 2 + 74.5 * (u + v) / n / depth];
            };
            let out = '';
            for (let i = -n; i <= n; i++) {
                if (i === 0) continue;
                out += line(...project(i, -n), ...project(i, n), 'ground');
                out += line(...project(-n, i), ...project(n, i), 'ground');
            }
            return out + line(...project(0, -n), ...project(0, n), 'axis')
                       + line(...project(-n, 0), ...project(n, 0), 'axis');
        }

        function drawRuler(svg) {
            const w = svg.clientWidth;
            let out = '<rect class="marker" x="3" y="2" width="8" height="22"/>';
            for (let i = 0; i <= 100; i++) {
                const x = Math.round(7 + i * (w - 14) / 100) + 0.5;
                out += line(x, 0, x, i % 5 === 0 ? 25 : 12, 'tick');
                if (i % 5 === 0) out += `<text x="${x - 1}" y="22">${i}</text>`;
            }
            svg.innerHTML = out;
        }

        function draw() {
            document.querySelectorAll('.viewport').forEach(vp => {
                const svg = vp.querySelector('.grid');
                const grid = vp.dataset.view === 'flat' ? flatGrid : perspectiveGrid;
                svg.innerHTML = grid(svg.clientWidth, svg.clientHeight);
            });
            drawRuler(document.querySelector('.ruler'));
        }

        window.onload = draw;
        window.onresize = draw;
    </script>
</body>
</html>
```
FILE: styles.css
```
* {
    box-sizing: border-box;
}
body {
    margin: 0;
    background: #444;
    color: #e6e6e6;
    font: 11px/16px Roboto, "Liberation Sans", sans-serif;
    overflow: hidden;
}
button, input, select {
    margin: 0;
    padding: 0;
    border: 0;
    border-radius: 0;
    background: none;
    color: inherit;
    font: inherit;
    min-width: 0;
}
select {
    appearance: none;
}
a {
    color: inherit;
    text-decoration: none;
}
hr {
    flex: none;
    width: 2px;
    margin: 0 2px;
    border: 0;
    background: #222;
}

/* icons */
.sprite {
    position: absolute;
    width: 0;
    height: 0;
}
svg {
    fill: #d0d0d0;
    display: block;
}
.t { fill: #45c0c0; }
.o { fill: #fbb01c; }
.k { fill: #3c3c3c; }
.s, .ts, .os { fill: none; stroke: #d0d0d0; }
.ts { stroke: #45c0c0; }
.os { stroke: #f5a10a; }
.w2 { stroke-width: 2; }
.w3 { stroke-width: 3; }
.k2 { stroke: #3c3c3c; stroke-width: 4; }
.k3 { stroke: #555; stroke-width: 5; }

.app {
    height: 100vh;
    display: flex;
    flex-direction: column;
}

/* title bar */
.titlebar {
    position: relative;
    flex: none;
    display: flex;
    height: 20px;
    background: #4c4144;
    border-bottom: 1px solid #b8b4b0;
    overflow: hidden;
}
.wallpaper {
    position: absolute;
    left: 0;
    top: 0;
}
.app-icon {
    position: relative;
    width: 11px;
    height: 20px;
}
.caption {
    position: relative;
    flex: 1;
    color: #111;
    font-size: 13px;
    line-height: 20px;
}
.window-buttons {
    position: relative;
    display: flex;
    width: 94px;
    height: 17px;
    border: 1px solid #aaa;
    border-width: 0 0 1px 1px;
    border-radius: 0 0 0 4px;
    overflow: hidden;
}
.window-buttons button {
    flex: 1;
    display: flex;
    justify-content: center;
    align-items: center;
    background: linear-gradient(#a79fa0, #6b6264 50%, #80787a);
    border-right: 1px solid #bbb;
}
.window-buttons svg {
    width: 13px;
    height: 13px;
}
.window-buttons .close {
    flex: 0 0 39px;
    border-right: 0;
    background: linear-gradient(#d87a66, #b32a14 50%, #c94a2c);
}

/* menu bar */
.menubar {
    flex: none;
    display: flex;
    height: 24px;
    background: linear-gradient(#525252, #444);
    border-bottom: 1px solid #161616;
    align-items: stretch;
}
.menu {
    flex: 1;
    display: flex;
    gap: 27px;
    padding-left: 3px;
    font: 11px/23px "Open Sans", sans-serif;
    color: #f2f2f2;
    white-space: nowrap;
}
.menu a:nth-child(n+9) {
    padding-right: 1px;
}
.swatch-menu {
    width: 120px;
    background: #cfcfcf;
    display: flex;
    align-items: center;
    justify-content: space-between;
    padding: 0 4px 0 5px;
}
.swatch-menu i {
    width: 16px;
    height: 16px;
    border: 1px solid #bbb;
}
.swatch-menu b {
    border: 5px solid transparent;
    border-top-color: #000;
    border-bottom: 0;
}
.search-help {
    width: 105px;
    background: #fff;
}
.menubar label {
    width: 85px;
    padding-right: 3px;
    text-align: right;
    line-height: 24px;
}
.combo {
    height: 20px;
    padding: 0 6px;
    background: #656565 url("data:image/svg+xml,%3Csvg xmlns='http://www.w3.org/2000/svg' viewBox='0 0 8 6'%3E%3Cpath d='M1 0h6L4 5z' fill='%23ddd'/%3E%3C/svg%3E") no-repeat right 5px center / 8px 6px;
    border: 1px solid #5a5a5a;
    color: #e0e0e0;
}
.menubar .combo {
    width: 126px;
    height: 23px;
    padding-left: 4px;
    background-position: right -5px center;
}

/* toolbar */
.toolbar {
    flex: none;
    display: flex;
    align-items: center;
    height: 34px;
    margin-left: -2px;
    border-bottom: 1px solid #6a6a6a;
}
.toolbar button {
    position: relative;
    flex: none;
    width: 32px;
    height: 30px;
    display: flex;
    justify-content: center;
    align-items: center;
}
.toolbar svg {
    width: 23px;
    height: 23px;
}
.toolbar hr {
    height: 16px;
    background: #1e1e1e;
}
.toolbar .on, .categories .on {
    background: #5f8ac4;
    border-radius: 3px;
}
.more {
    position: relative;
}
.more::after {
    content: "";
    position: absolute;
    right: 0;
    bottom: 2px;
    border: 2px solid #e0e0e0;
    border-top-color: transparent;
    border-left-color: transparent;
}
.toolbar .combo {
    width: 69px;
    margin: 4px 1px 0;
    align-self: flex-start;
    padding: 0 4px;
}
.toolbar .wide {
    width: 118px;
}

/* ribbon */
.ribbon-tabs {
    flex: none;
    display: flex;
    height: 20px;
    padding-left: 3px;
    background: #525252;
    border-bottom: 1px solid #2c2c2c;
    font: 12px/16px "Open Sans", sans-serif;
    color: #a8a8a8;
}
.ribbon-tabs button {
    flex: none;
    margin-right: 53px;
    padding-top: 1px;
}
.ribbon-tabs .active {
    width: 90px;
    margin-right: 27px;
    margin-top: 2px;
    padding: 0 0 1px 14px;
    border: 1px solid #2c2c2c;
    border-bottom: 0;
    background: linear-gradient(#6b6b6b, #4a4a4a);
    color: #eee;
}
.ribbon-min {
    width: 24px;
    height: 10px;
    margin-top: 5px;
    margin-left: -22px;
}
.ribbon-panel {
    flex: none;
    height: 19px;
    background: linear-gradient(#484848, #363636);
    border-bottom: 1px solid #262626;
}
.ribbon-panel button {
    height: 18px;
    margin-left: 2px;
    padding: 0 5px 0 3px;
    background: #484848;
    border: 1px solid #585858;
    font: 13px/15px "Open Sans", sans-serif;
}

/* workspace */
.workspace {
    flex: 1;
    min-height: 0;
    display: flex;
}
.grip {
    flex: none;
    height: 4px;
    margin-top: 7px;
    background: radial-gradient(#aaa 50%, transparent 50%) 0 0 / 2px 2px;
    opacity: .6;
}
.layout-strip {
    flex: none;
    width: 65px;
    display: flex;
    flex-direction: column;
}
.strip-body {
    flex: 1;
    width: 30px;
    margin-top: 3px;
    margin-bottom: 2px;
    display: flex;
    flex-direction: column;
    justify-content: flex-end;
    background: linear-gradient(90deg, #2e2e2e 80%, #232323);
}
.strip-arrow {
    width: 19px;
    height: 20px;
    margin-bottom: 10px;
    padding: 5px;
    background: #4e4e4e;
    border: 1px solid #5c5c5c;
    border-radius: 0 3px 3px 0;
}
.strip-arrow svg {
    width: 8px;
    height: 9px;
}
.strip-tile {
    height: 46px;
    padding: 8px 2px 8px 0;
    display: grid;
    grid-template-columns: 12px 1fr;
    gap: 2px;
    background: linear-gradient(#4a5f80, #3f7cd8);
}
.strip-tile i {
    background: linear-gradient(#5c6675, #444e5e);
    border: 1px solid #333c4c;
}

/* scene explorer */
.explorer {
    flex: none;
    width: 332px;
    margin-left: 6px;
    display: flex;
    flex-direction: column;
    font: 12px/16px "Noto Sans", sans-serif;
    color: #f2f2f2;
}
.explorer .grip {
    margin-left: 2px;
    margin-right: 4px;
}
.explorer-menu {
    display: flex;
    gap: 21px;
    padding: 8px 0 0 15px;
    height: 29px;
}
.explorer-search {
    display: flex;
    align-items: center;
    height: 25px;
    margin-left: 4px;
}
.explorer-search input {
    width: 150px;
    height: 23px;
    border: 1px solid #666;
}
.explorer-search button {
    width: 24px;
    height: 24px;
    display: flex;
    align-items: center;
    justify-content: center;
}
.explorer-search svg, .filters svg, .explorer-foot svg, .categories svg, .command-tabs svg {
    width: 16px;
    height: 16px;
}
.explorer-search .clear svg {
    width: 13px;
    height: 13px;
}
.explorer-search hr, .explorer-foot hr {
    height: 22px;
    background: linear-gradient(90deg, #222 50%, #888 50%);
}
.explorer-search hr {
    margin-right: 3px;
}
.on {
    background: #5f8ac4;
}
.explorer-body {
    flex: 1;
    display: flex;
    gap: 2px;
    margin-top: 1px;
}
.filters {
    width: 22px;
    padding-top: 4px;
    display: flex;
    flex-direction: column;
    gap: 3px;
}
.filters button {
    width: 22px;
    height: 20px;
    display: flex;
    align-items: center;
    justify-content: center;
}
.filters hr {
    width: 18px;
    height: 2px;
    margin: 0 2px;
    background: #888;
    border-top: 1px solid #222;
}
.list {
    flex: 1;
    border: 1px solid #383838;
    margin-right: 1px;
}
.list table {
    width: 100%;
    border-collapse: separate;
    border-spacing: 0;
}
.list th {
    height: 20px;
    padding: 0 2px;
    border: 1px solid #5c5c5c;
    font-weight: normal;
    line-height: 16px;
    text-align: left;
}
.list th:last-child {
    width: 65px;
}
.list th span {
    float: right;
    font-size: 9px;
}
.explorer-foot {
    display: flex;
    align-items: center;
    height: 24px;
    margin: 3px 0 5px 4px;
}
.explorer-foot select {
    width: 145px;
    height: 23px;
    padding-left: 1px;
    border: 1px solid #666;
    color: #ff0;
}
.caret {
    margin: 0 5px 0 4px;
    border: 3px solid transparent;
    border-top: 4px solid #111;
    border-bottom: 0;
}
.explorer-foot button {
    width: 24px;
    height: 24px;
    display: flex;
    align-items: center;
    justify-content: center;
}
.explorer-foot span {
    margin-left: 2px;
}
.explorer-foot b {
    margin-left: 18px;
    align-self: flex-start;
    line-height: 8px;
    font-weight: normal;
    color: #5a5a9c;
}

/* viewports */
.viewports {
    flex: 1;
    min-width: 0;
    display: grid;
    grid-template-columns: 1fr 1fr;
    grid-template-rows: 1fr 1fr;
    gap: 4px;
    padding: 5px 4px 2px 1px;
}
.viewport {
    position: relative;
    min-width: 0;
    min-height: 0;
    background: #343434;
    border: 2px solid #393939;
}
.viewport.active {
    border-color: #7d6a28;
    background: linear-gradient(#161616, #2e2e2e 30%, #444 75%, #4b4b4b);
}
.grid {
    position: absolute;
    width: 100%;
    height: 100%;
}
.minor { stroke: #5e5e5e; }
.dim { stroke: #4c4c4c; }
.axis { stroke: #000; }
.ground { stroke: #5a5a5a; }
.vp-label {
    position: absolute;
    left: 4px;
    top: 5px;
    display: flex;
    gap: 3px;
    font-family: "Open Sans", sans-serif;
    color: #dcdcdc;
}
.viewcube {
    position: absolute;
    right: 15px;
    top: 14px;
    width: 80px;
    height: 80px;
    font-weight: bold;
    text-anchor: middle;
    fill: #a8a8a8;
}
.face {
    font-size: 7px;
    fill: #62656c;
}
.tiny {
    font-size: 5px;
}
.tripod {
    position: absolute;
    left: -2px;
    bottom: 14px;
    width: 60px;
    height: 50px;
    text-anchor: middle;
    font-size: 11px;
}

/* command panel */
.command {
    flex: none;
    width: 232px;
    margin: 0 0 2px;
    padding-left: 4px;
    border-left: 1px solid #383838;
}
.command .grip {
    margin-left: -2px;
}
.command-tabs {
    display: flex;
    gap: 2px;
    margin-top: 4px;
    margin-left: -2px;
}
.command-tabs button {
    width: 30px;
    height: 26px;
    display: flex;
    align-items: center;
    justify-content: center;
    background: #3a3a3a;
    border-radius: 4px 4px 0 0;
}
.command-tabs button svg {
    opacity: .7;
}
.command-tabs .active {
    width: 27px;
    background: none;
    border: 1px dotted #ccc;
}
.command-tabs .active svg {
    opacity: 1;
}
.categories {
    display: flex;
    gap: 2px;
    margin-top: 5px;
}
.categories button {
    width: 22px;
    height: 22px;
    display: flex;
    align-items: center;
    justify-content: center;
}
.categories .on svg {
    width: 20px;
    height: 20px;
}
.primitives {
    display: block;
    width: 100%;
    margin-top: 8px;
    padding-left: 3px;
    background-position: right -3px center;
}
.rollout {
    margin-top: 4px;
    padding: 1px 0 3px;
    background: #515151;
    border: 1px solid #3b3b3b;
    border-radius: 3px;
}
.rollout h2 {
    position: relative;
    margin: 0 0 2px;
    padding-left: 18px;
    font: bold 11px/18px "Open Sans", sans-serif;
    color: #fff;
}
.rollout h2::before {
    content: "";
    position: absolute;
    left: 6px;
    top: 6px;
    border: 3px solid transparent;
    border-top: 5px solid #ccc;
    border-bottom: 0;
}
.rollout h2::after {
    content: "";
    position: absolute;
    right: 8px;
    top: 4px;
    width: 6px;
    height: 6px;
    background: radial-gradient(#999 50%, transparent 50%) 0 0 / 2px 2px;
}
.autogrid {
    display: flex;
    align-items: center;
    gap: 2px;
    height: 16px;
    margin: 0 0 3px 65px;
    color: #8e8e8e;
}
.autogrid input {
    appearance: none;
    width: 11px;
    height: 11px;
    border: 1px solid #444;
    background: #565656;
}
.object-grid {
    display: grid;
    grid-template-columns: 68px 68px;
    gap: 4px 10px;
    justify-content: center;
}
.object-grid button {
    height: 17px;
    background: #646464;
    border: 1px solid #5a5a5a;
    border-radius: 3px;
    line-height: 15px;
}
.name-color {
    display: flex;
    gap: 3px;
    margin: 7px 0 5px 38px;
}
.name-color input {
    width: 131px;
    height: 20px;
    background: #5a5a5a;
    border: 1px solid #4a4a4a;
}
.color {
    width: 17px;
    height: 20px;
    background: #c42f82;
    border: 1px solid #111;
}

/* time slider and track bar */
.time-slider {
    flex: none;
    display: flex;
    gap: 1px;
    height: 24px;
    padding-top: 3px;
}
.time-slider button {
    width: 15px;
    height: 17px;
    background: #5c5c5c;
    border: 1px solid #666;
    border-radius: 2px;
    line-height: 15px;
}
.time-slider .thumb {
    width: 123px;
    background: #646464;
}
.track {
    flex: none;
    display: flex;
    height: 26px;
    padding-right: 38px;
    border-top: 1px solid #161616;
}
.track button {
    width: 49px;
    padding-left: 10px;
}
.track button svg {
    width: 18px;
    height: 16px;
}
.ruler {
    flex: 1;
    height: 25px;
    background: #2b2b2b;
    fill: #bcbcbc;
    text-anchor: middle;
    overflow: visible;
}
.tick { stroke: #7c7c7c; }
.marker { fill: #988a1e; }

/* status bar */
.status {
    flex: none;
    display: flex;
    height: 52px;
    padding-top: 5px;
}
.status button {
    display: flex;
    align-items: center;
    justify-content: center;
}
.status svg {
    width: 16px;
    height: 16px;
}
.listener {
    width: 92px;
}
.macro {
    height: 22px;
    background: #dbc4c4;
    border: solid #999;
    border-width: 2px 2px 0 0;
}
.listener input {
    width: 92px;
    height: 23px;
    margin-top: 1px;
    background: #fff;
    border: solid #999;
    border-width: 2px 2px 0 0;
    color: #888;
    font: 12px/18px "Liberation Mono", monospace;
}
.prompt {
    flex: 1;
    margin-left: 5px;
    padding-left: 3px;
    border-left: 1px solid #161616;
    color: #f0f0f0;
}
.prompt p {
    margin: 5px 0 9px;
}
.coords {
    width: 445px;
}
.coord-row {
    display: flex;
    align-items: center;
    height: 24px;
}
.coord-row button {
    width: 26px;
}
.coord-row input {
    width: 59px;
    height: 19px;
    margin: 0 7px 0 3px;
    background: #595959;
    border: 1px solid #3c3c3c;
}
.coord-row label {
    width: 15px;
    text-align: right;
}
.coord-row span {
    margin-left: 6px;
}
.tag-row {
    display: flex;
    align-items: center;
    gap: 5px;
    margin-top: 3px;
    padding-left: 309px;
}
.tag-row button {
    width: 22px;
    height: 20px;
    background: #33f3f3;
    border-left: 1px solid #111;
    border-radius: 3px;
}
.transport {
    width: 131px;
}
.transport div {
    display: flex;
    align-items: center;
    height: 23px;
}
.transport hr {
    height: 16px;
    margin: 0 1px;
    background: #1e1e1e;
}
.transport button {
    width: 22px;
    height: 22px;
}
.transport .more {
    width: 24px;
}
.spin {
    width: 69px;
    height: 18px;
    display: flex;
    align-items: center;
    justify-content: space-between;
    padding: 0 3px;
    background: #656565;
}
.spin input {
    width: 40px;
}
.status .spin svg {
    width: 6px;
    height: 11px;
}
.set-keys, .key-modes button, .filter-btn {
    background: #646464;
    border: 1px solid #5a5a5a;
    border-radius: 3px;
}
.set-keys {
    width: 43px;
    height: 43px;
    margin: 2px 4px 0 0;
}
.status .set-keys svg {
    width: 30px;
    height: 30px;
}
.key-modes {
    width: 46px;
    margin: 2px 5px 0 0;
}
.key-modes button {
    width: 46px;
    height: 21px;
    margin-bottom: 1px;
}
.key-filters {
    width: 115px;
    margin-top: 2px;
}
.key-filters .combo {
    display: block;
    width: 115px;
    margin-bottom: 3px;
}
.key-filters div {
    display: flex;
    gap: 6px;
}
.tangent {
    width: 20px;
    height: 20px;
}
.filter-btn {
    flex: 1;
    height: 20px;
}
.nav-tools {
    width: 92px;
    margin-left: 7px;
    display: grid;
    grid-template-columns: repeat(4, 23px);
    grid-auto-rows: 23px;
}

/* pen notes */
.ink {
    position: absolute;
    left: 0;
    top: 0;
    width: 100%;
    height: 100%;
    pointer-events: none;
}
.ink path {
    fill: none;
    stroke: #ff2010;
    stroke-width: 3;
    stroke-linecap: round;
    stroke-linejoin: round;
    vector-effect: non-scaling-stroke;
}
```
